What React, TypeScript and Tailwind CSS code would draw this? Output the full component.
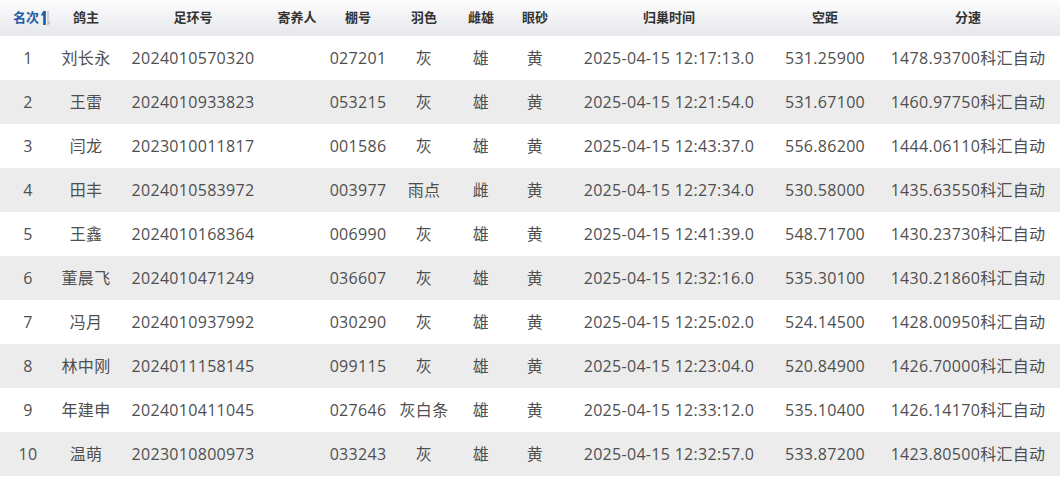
import React from "react";

const rows = [
  ["1", "刘长永", "2024010570320", "", "027201", "灰", "雄", "黄", "2025-04-15 12:17:13.0", "531.25900", "1478.93700科汇自动"],
  ["2", "王雷", "2024010933823", "", "053215", "灰", "雄", "黄", "2025-04-15 12:21:54.0", "531.67100", "1460.97750科汇自动"],
  ["3", "闫龙", "2023010011817", "", "001586", "灰", "雄", "黄", "2025-04-15 12:43:37.0", "556.86200", "1444.06110科汇自动"],
  ["4", "田丰", "2024010583972", "", "003977", "雨点", "雌", "黄", "2025-04-15 12:27:34.0", "530.58000", "1435.63550科汇自动"],
  ["5", "王鑫", "2024010168364", "", "006990", "灰", "雄", "黄", "2025-04-15 12:41:39.0", "548.71700", "1430.23730科汇自动"],
  ["6", "董晨飞", "2024010471249", "", "036607", "灰", "雄", "黄", "2025-04-15 12:32:16.0", "535.30100", "1430.21860科汇自动"],
  ["7", "冯月", "2024010937992", "", "030290", "灰", "雄", "黄", "2025-04-15 12:25:02.0", "524.14500", "1428.00950科汇自动"],
  ["8", "林中刚", "2024011158145", "", "099115", "灰", "雄", "黄", "2025-04-15 12:23:04.0", "520.84900", "1426.70000科汇自动"],
  ["9", "年建申", "2024010411045", "", "027646", "灰白条", "雄", "黄", "2025-04-15 12:33:12.0", "535.10400", "1426.14170科汇自动"],
  ["10", "温萌", "2023010800973", "", "033243", "灰", "雄", "黄", "2025-04-15 12:32:57.0", "533.87200", "1423.80500科汇自动"],
];

const headers = ["鸽主", "足环号", "寄养人", "棚号", "羽色", "雌雄", "眼砂", "归巢时间", "空距", "分速"];

const gridCols =
  "grid grid-cols-[56px_60px_154px_54px_68px_64px_50px_58px_210px_102px_184px]";

function SortIcon() {
  return (
    <svg width="11" height="16" viewBox="0 0 11 16" className="ml-[1px]">
      <path d="M3.2 1 H5.8 V15 H3.2 V5.5 H0.8 Z" fill="#1f5ba6" />
      <path d="M8 1 V14.5 L10.2 11.5" stroke="#b8bcc4" strokeWidth="1.2" fill="none" />
    </svg>
  );
}

export default function App() {
  return (
    <div
      className="w-[1060px] h-[477px] overflow-hidden bg-white"
      style={{ fontFamily: '"Open Sans", "Noto Sans CJK SC", sans-serif' }}
    >
      <div
        className={`${gridCols} h-[36px] items-center bg-gradient-to-b from-[#fdfdfd] to-[#e6e7ec] text-[13px] font-bold text-[#333]`}
      >
        <div className="flex items-center justify-center pl-[8px] text-[#1f5ba6]">
          名次
          <SortIcon />
        </div>
        {headers.map((h, i) => (
          <div key={i} className="text-center">
            {h}
          </div>
        ))}
      </div>
      {rows.map((r, i) => (
        <div
          key={i}
          className={`${gridCols} h-[44px] items-center text-[16px] tracking-[0.3px] text-[#4f4f4f] ${
            i % 2 === 1 ? "bg-[#ececec]" : "bg-white"
          }`}
        >
          {r.map((c, j) => (
            <div key={j} className="text-center whitespace-nowrap">
              {c}
            </div>
          ))}
        </div>
      ))}
    </div>
  );
}
